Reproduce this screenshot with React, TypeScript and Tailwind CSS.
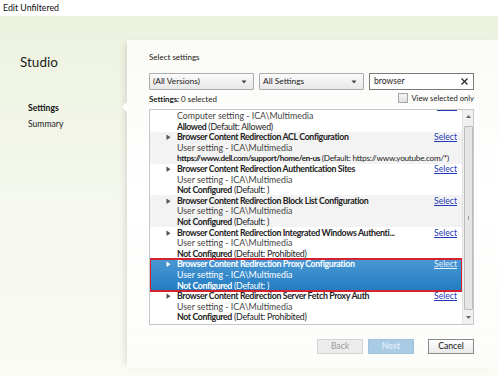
import type { ReactNode } from 'react';

const font = { fontFamily: 'Lato, "Open Sans", sans-serif' };

type Row = {
    title: string;
    scope: string;
    value: string;
    def: string;
    shaded?: boolean;
    selected?: boolean;
    partial?: boolean;
    long?: boolean;
};

const rows: Row[] = [
    { title: '', scope: 'Computer setting - ICA\\Multimedia', value: 'Allowed', def: '(Default: Allowed)', partial: true },
    { title: 'Browser Content Redirection ACL Configuration', scope: 'User setting - ICA\\Multimedia', value: 'https://www.dell.com/support/home/en-us', def: '(Default: https://www.youtube.com/*)', shaded: true, long: true },
    { title: 'Browser Content Redirection Authentication Sites', scope: 'User setting - ICA\\Multimedia', value: 'Not Configured', def: '(Default: )' },
    { title: 'Browser Content Redirection Block List Configuration', scope: 'User setting - ICA\\Multimedia', value: 'Not Configured', def: '(Default: )', shaded: true },
    { title: 'Browser Content Redirection Integrated Windows Authenti...', scope: 'User setting - ICA\\Multimedia', value: 'Not Configured', def: '(Default: Prohibited)' },
    { title: 'Browser Content Redirection Proxy Configuration', scope: 'User setting - ICA\\Multimedia', value: 'Not Configured', def: '(Default: )', selected: true },
    { title: 'Browser Content Redirection Server Fetch Proxy Auth', scope: 'User setting - ICA\\Multimedia', value: 'Not Configured', def: '(Default: Prohibited)' },
];

function Caret({ color = '#555' }: { color?: string }) {
    return (
        <svg width="7" height="7" viewBox="0 0 7 7" className="shrink-0">
            <path d="M0.5 0.5 L4.5 3.3 L0.5 6 Z" fill={color} />
        </svg>
    );
}

function Dropdown({ label, children }: { label: string; children?: ReactNode }) {
    return (
        <div className="flex h-[17px] w-[105px] items-center justify-between rounded-[1px] border border-[#adadad] bg-gradient-to-b from-[#fbfbfb] to-[#e8e8e8] pl-[3px] pr-[6px] text-[8.4px] text-[#222]">
            <span>{label}</span>
            {children}
            <svg width="6" height="4" viewBox="0 0 6 4"><path d="M0.5 0.5 H5.5 L3 3.5 Z" fill="#444" /></svg>
        </div>
    );
}

function SettingRow({ row }: { row: Row }) {
    const base = row.selected
        ? 'bg-gradient-to-b from-[#4a98d4] to-[#1f7cc0] text-white outline-[2.5px] outline-[#d3232e] outline outline-offset-[-1px] relative'
        : row.shaded
          ? 'bg-[#f3f3f3] text-[#222]'
          : 'bg-white text-[#222]';
    const link = row.selected ? 'text-[#e6f0fa]' : 'text-[#2439b8]';
    return (
        <div className={`flex h-[31.8px] pl-[16px] pr-[5px] pt-[0.5px] text-[8.8px] leading-[10.6px] ${base}`}>
            <div className="flex w-[11px] shrink-0 pt-[2px]">
                {!row.partial && <Caret color={row.selected ? '#fff' : '#555'} />}
            </div>
            <div className="min-w-0 flex-1 overflow-hidden">
                <div className="flex h-[10.6px] justify-between">
                    <span className="whitespace-nowrap font-bold tracking-[-0.35px]">{row.title}</span>
                    {row.partial ? (
                        <span className="h-[10.6px] w-[20px] border-b border-[#2439b8]" />
                    ) : (
                        <span className={`shrink-0 text-[8.6px] underline ${link}`}>Select</span>
                    )}
                </div>
                <div className={`whitespace-nowrap ${row.selected ? 'text-white' : 'text-[#444]'}`}>{row.scope}</div>
                <div className={`whitespace-nowrap tracking-[-0.25px] ${row.long ? 'text-[8.2px]' : ''}`}>
                    <span className="font-bold tracking-[-0.4px]">{row.value}</span> {row.def}
                </div>
            </div>
        </div>
    );
}

export default function App() {
    return (
        <div className="flex h-[376px] w-[498px] flex-col overflow-hidden bg-[#f6f8ee]" style={font}>
            <div className="flex h-[16px] shrink-0 items-center bg-white pl-[3px] text-[8.8px] text-[#111]">Edit Unfiltered</div>

            <div className="flex min-h-0 flex-1 bg-gradient-to-b from-[#edf2df] via-[#f5f8ee] to-[#fafbf4]">
                {/* Sidebar */}
                <div className="relative w-[127px] shrink-0">
                    <div className="pl-[20px] pt-[37px] text-[13.5px] leading-[18px] text-[#222]">Studio</div>
                    <div className="pl-[28px] pt-[31px] text-[8.6px] font-bold text-[#111]">Settings</div>
                    <div className="pl-[28px] pt-[3px] text-[8.6px] text-[#222]">Summary</div>
                    <div className="absolute right-0 top-[86px] h-0 w-0 border-y-[5px] border-r-[5px] border-y-transparent border-r-white" />
                </div>

                {/* Main panel */}
                <div className="mb-[8px] mt-[24px] flex min-w-0 flex-1 flex-col bg-gradient-to-b from-white/70 via-white to-white/60 pl-[22px] pr-[24px] pt-[11px] shadow-[-5px_0_6px_-3px_rgba(0,0,0,0.12)]">
                    <div className="text-[8px] leading-[12px] text-[#222]">Select settings</div>

                    <div className="mt-[10px] flex gap-[5px]">
                        <Dropdown label="(All Versions)" />
                        <Dropdown label="All Settings" />
                        <div className="flex h-[17px] w-[105px] items-center justify-between border border-[#7a7a7a] bg-white pl-[4px] pr-[4px] text-[8.6px] text-[#222]">
                            <span>browser</span>
                            <svg width="9" height="9" viewBox="0 0 9 9"><path d="M1.5 1.5 L7.5 7.5 M7.5 1.5 L1.5 7.5" stroke="#222" strokeWidth="1.2" /></svg>
                        </div>
                    </div>

                    <div className="mt-[2px] flex h-[13px] items-center justify-between text-[8px] text-[#222]">
                        <span><span className="font-bold tracking-[-0.1px]">Settings:</span> 0 selected</span>
                        <span className="flex items-center gap-[3px] text-[7.6px]">
                            <span className="h-[10px] w-[10px] border border-[#a5a5a5] bg-gradient-to-b from-[#f4f4f4] to-[#e2e2e2]" />
                            View selected only
                        </span>
                    </div>

                    {/* List */}
                    <div className="mt-[4px] flex h-[216px] border border-[#c8c8c8] bg-white">
                        <div className="min-w-0 flex-1 overflow-hidden">
                            <div className="-mt-[10px]">
                                {rows.map((r, i) => <SettingRow key={i} row={r} />)}
                            </div>
                        </div>
                        <div className="flex w-[11px] shrink-0 flex-col items-center border-l border-[#e2e2e2] bg-[#f0f0f0]">
                            <svg width="5" height="3" viewBox="0 0 5 3" className="mt-[5px]"><path d="M0 3 L2.5 0 L5 3 Z" fill="#666" /></svg>
                            <div className="mt-[8px] flex w-[9px] flex-1 items-center justify-center rounded-[1px] border border-[#bcbcbc] bg-[#e6e6e6]">
                                <div className="h-[4px] w-[1px] bg-[#999]" />
                            </div>
                            <svg width="5" height="3" viewBox="0 0 5 3" className="mb-[5px] mt-[6px]"><path d="M0 0 L5 0 L2.5 3 Z" fill="#666" /></svg>
                        </div>
                    </div>

                    <div className="mt-[14px] flex justify-end text-[8.6px]">
                        <div className="flex h-[15px] w-[46px] items-center justify-center border border-[#d4d4d4] bg-[#ececec] text-[#9a9a9a]">Back</div>
                        <div className="ml-[5px] flex h-[15px] w-[46px] items-center justify-center border border-[#9fc3df] bg-[#a9cbe4] text-[#eaf3fa]">Next</div>
                        <div className="ml-[14px] flex h-[15px] w-[46px] items-center justify-center border border-[#8a8a8a] bg-gradient-to-b from-white to-[#e9e9e9] text-[#111]">Cancel</div>
                    </div>
                </div>
            </div>
        </div>
    );
}
